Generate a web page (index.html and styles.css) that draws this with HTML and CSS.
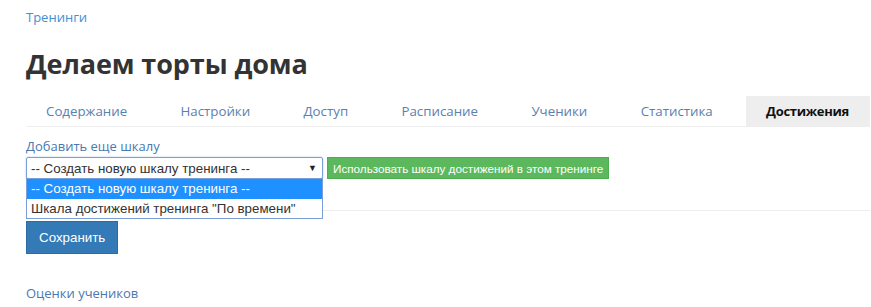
FILE: index.html
```html
<!DOCTYPE html>
<html lang="ru">
<head>
<meta charset="utf-8">
<link rel="stylesheet" href="styles.css">
</head>
<body>
<div class="page">
  <a class="crumb" href="#">Тренинги</a>
  <h1 class="title">Делаем торты дома</h1>
  <ul class="tabs">
    <li class="tab">Содержание</li>
    <li class="tab">Настройки</li>
    <li class="tab">Доступ</li>
    <li class="tab">Расписание</li>
    <li class="tab">Ученики</li>
    <li class="tab">Статистика</li>
    <li class="tab active">Достижения</li>
  </ul>
  <div class="label">Добавить еще шкалу</div>
  <div class="row">
    <div class="select-wrap">
      <div class="select"><span>-- Создать новую шкалу тренинга --</span><span class="arrow">▼</span></div>
      <div class="options">
        <div class="option selected">-- Создать новую шкалу тренинга --</div>
        <div class="option">Шкала достижений тренинга "По времени"</div>
      </div>
    </div>
    <button class="btn-green">Использовать шкалу достижений в этом тренинге</button>
  </div>
  <hr class="sep">
  <button class="btn-save">Сохранить</button>
  <div class="link2">Оценки учеников</div>
</div>
</body>
</html>
```
FILE: styles.css
```css
html, body { margin: 0; padding: 0; background: #fff; }
body { font-family: "Open Sans", "Liberation Sans", sans-serif; }
.page { padding: 8px 1px 0 26px; }
.crumb { display: block; font-size: 13px; line-height: 18px; color: #3f8fd2; text-decoration: none; }
.title { margin: 20px 0 0 0; font-size: 27px; line-height: 36px; font-weight: 700; color: #333; letter-spacing: -0.1px; }
.tabs { list-style: none; margin: 14px 0 0 0; padding: 0; display: flex; justify-content: space-between; border-bottom: 1px solid #eee; }
.tab { height: 30px; line-height: 30px; padding: 0 20px; font-size: 13.3px; color: #5a80b0; }
.tab.active { background: #eee; color: #111; font-weight: 700; font-size: 13px; letter-spacing: -0.3px; padding: 0 21px 0 20px; }
.label { margin-top: 10px; font-size: 13px; line-height: 18px; color: #4a78b0; }
.row { margin-top: 2px; display: flex; align-items: flex-start; gap: 4px; }
.select-wrap { position: relative; width: 297px; }
.select { box-sizing: border-box; height: 22px; border: 1px solid #7aa0dc; border-radius: 2px; display: flex; justify-content: space-between; align-items: center; padding: 0 5px 0 4px; font-family: "Liberation Sans", Arial, sans-serif; font-size: 13.33px; color: #333; box-shadow: 0 0 2px #a9c4ef; }
.arrow { font-size: 9px; color: #222; }
.options { position: absolute; left: 0; top: 21px; width: 297px; box-sizing: border-box; border: 1px solid #7a9fd8; background: #fff; font-family: "Liberation Sans", Arial, sans-serif; font-size: 13.33px; color: #333; z-index: 2; }
.option { height: 19px; line-height: 19px; padding-left: 4px; white-space: nowrap; }
.option.selected { background: #1e90ff; color: #fff; height: 20px; line-height: 20px; }
.btn-green { height: 22px; margin: 0; padding: 0 5px; border: 1px solid #4cae4c; background: #5cb85c; color: #fff; font-family: "Liberation Sans", Arial, sans-serif; font-size: 11.7px; border-radius: 0; }
.sep { margin: 31px 0 0 0; border: 0; border-top: 1px solid #eee; height: 0; }
.btn-save { display: block; margin-top: 10px; height: 33px; padding: 0 12px; background: #337ab7; border: 1px solid #2e6da4; color: #fff; font-family: "Liberation Sans", Arial, sans-serif; font-size: 13.33px; border-radius: 0; }
.link2 { margin-top: 30px; font-size: 13px; line-height: 18px; color: #4a78b0; }
```
